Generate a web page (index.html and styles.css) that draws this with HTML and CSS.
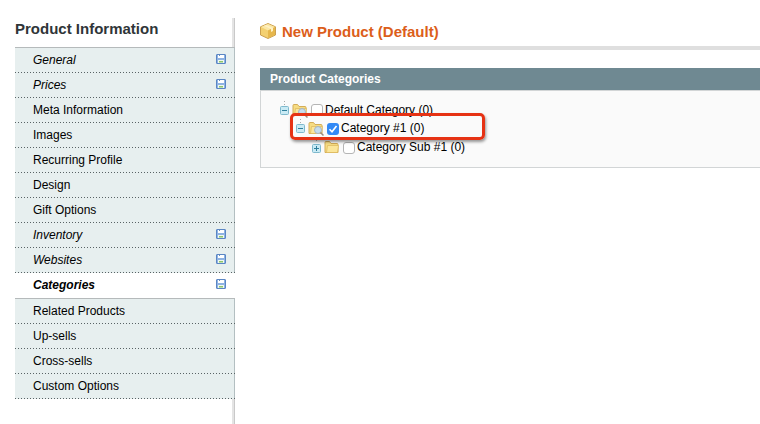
FILE: index.html
```
<!DOCTYPE html>
<html lang="en">
<head>
<meta charset="utf-8">
<title>New Product</title>
<link rel="stylesheet" href="styles.css">
</head>
<body>
<svg class="defs" width="0" height="0">
  <defs>
    <symbol id="disk" viewBox="0 0 10 10">
      <rect x=".5" y=".5" width="9" height="9" rx=".5" fill="#8fb3e3" stroke="#5b86c4"/>
      <rect x="2" y="1" width="6" height="3" fill="#fff"/>
      <rect x="3" y="1" width="1" height="1" fill="#6d8fb9"/>
      <rect x="2" y="6" width="6" height="3" fill="#f2f8ee"/>
      <rect x="3" y="7" width="4" height="1.500" fill="#8cc66c"/>
    </symbol>
    <symbol id="folder" viewBox="0 0 16 14">
      <path d="M1 12.500V2.500Q1 1.500 2 1.500H5.500L7 3.500H13Q14 3.500 14 4.500V12.500Z" fill="#f6dc83" stroke="#d4ad58"/>
      <path d="M2.500 12.500L3.500 5.500H14.500L13.500 12.500Z" fill="#fbe69a" stroke="#dcb75c" stroke-width=".7"/>
    </symbol>
    <symbol id="search" viewBox="0 0 17 16">
      <use href="#folder" width="16" height="14"/>
      <circle cx="10" cy="9" r="3.500" fill="#c5dced" stroke="#a7b5c3"/>
      <path d="M12.500 11.500L15.500 14.500" stroke="#9a897e" stroke-width="1.500"/>
    </symbol>
    <symbol id="minus" viewBox="0 0 9 9">
      <rect x=".5" y=".5" width="8" height="8" rx="1" fill="#c9eaf4" stroke="#7fb9cd"/>
      <path d="M2 4.500H7" stroke="#2f7f9c"/>
    </symbol>
    <symbol id="plus" viewBox="0 0 9 9">
      <use href="#minus" width="9" height="9"/>
      <path d="M4.500 2V7" stroke="#2f7f9c"/>
    </symbol>
  </defs>
</svg>
<div class="page">
  <aside class="sidebar">
    <h3>Product Information</h3>
    <ul class="tabs">
      <li class="changed"><span>General</span><svg><use href="#disk"/></svg></li>
      <li class="changed"><span>Prices</span><svg><use href="#disk"/></svg></li>
      <li><span>Meta Information</span></li>
      <li><span>Images</span></li>
      <li><span>Recurring Profile</span></li>
      <li><span>Design</span></li>
      <li><span>Gift Options</span></li>
      <li class="changed"><span>Inventory</span><svg><use href="#disk"/></svg></li>
      <li class="changed"><span>Websites</span><svg><use href="#disk"/></svg></li>
      <li class="changed active"><span>Categories</span><svg><use href="#disk"/></svg></li>
      <li><span>Related Products</span></li>
      <li><span>Up-sells</span></li>
      <li><span>Cross-sells</span></li>
      <li><span>Custom Options</span></li>
    </ul>
  </aside>
  <main class="content">
    <header class="title">
      <svg class="box" viewBox="0 0 16 16">
        <path d="M8 .5L15.500 3.800V12L8 15.500L.5 12V3.800Z" fill="#f3d071" stroke="#cba050"/>
        <path d="M1 4L8 1L15 4L8 7.500Z" fill="#fbe7a5"/>
        <path d="M8 7.500L15 4V11.800L8 15Z" fill="#e6b74c"/>
        <path d="M4 2.700L11 6V9L13 8V5L6 1.900Z" fill="#fff1c4"/>
      </svg>
      <h1>New Product (Default)</h1>
    </header>
    <h4>Product Categories</h4>
    <section class="tree">
      <div class="node root"><svg class="toggle"><use href="#minus"/></svg><svg class="folder"><use href="#search" width="17" height="16"/></svg><i class="check"></i><span>Default Category (0)</span></div>
      <div class="node child"><svg class="toggle"><use href="#minus"/></svg><svg class="folder"><use href="#search" width="17" height="16"/></svg><i class="check on"><svg viewBox="0 0 12 12"><path d="M2.500 6.200L5 8.800L9.500 3" fill="none" stroke="#fff" stroke-width="1.600"/></svg></i><span>Category #1 (0)</span></div>
      <div class="node leaf"><svg class="toggle"><use href="#plus"/></svg><svg class="folder"><use href="#folder" width="16" height="14"/></svg><i class="check"></i><span>Category Sub #1 (0)</span></div>
      <div class="highlight"></div>
    </section>
  </main>
</div>
</body>
</html>
```
FILE: styles.css
```
* { box-sizing: border-box; }
body { margin: 0; background: #fff; color: #000; font: 12px/16px "Liberation Sans", Arial, sans-serif; overflow: hidden; }
h1, h3, h4, ul { margin: 0; padding: 0; }
svg { display: block; flex: none; }
.defs { position: absolute; }
.page { display: flex; height: 424px; padding-top: 18px; }
.sidebar { width: 220px; margin-left: 15px; background: linear-gradient(90deg, #e4e4e4 0 2px, #c9c9c9 2px) right / 3px 100% no-repeat; }
h3 { height: 29px; font-size: 15px; line-height: 22px; color: #2f3538; }
.tabs { list-style: none; border-top: 1px solid #b5babb; }
.tabs li { position: relative; display: flex; align-items: center; justify-content: space-between; height: 25px; padding: 0 8px 1px 18px; background: #e7efef; border-right: 1px solid #b3bfc1; }
.tabs li::after { content: ""; position: absolute; left: 0; right: -1px; bottom: 0; height: 1px; background: repeating-linear-gradient(90deg, #596365 0 1px, #e7efef 1px 3px); }
.tabs svg { width: 10px; height: 10px; margin-bottom: 2px; }
.changed { font-style: italic; }
.tabs .active { height: 26px; padding-bottom: 2px; font-weight: bold; background: #fff; border-right-color: #fff; }
.tabs .active::after { background: #b5babb; }
.content { flex: 1; margin-left: 25px; }
.title { display: flex; align-items: center; height: 32px; padding-bottom: 2px; border-bottom: 4px solid #dfdfdf; }
.box { width: 16px; height: 16px; margin-right: 6px; }
h1 { padding-top: 2px; font-size: 15px; line-height: 24px; color: #dc5e1a; }
h4 { height: 22px; margin-top: 18px; padding-left: 10px; background: #6f8992; color: #fff; font-size: 12px; line-height: 22px; }
.tree { position: relative; height: 78px; padding: 10px 0 0 19px; background: #fafafa; border: 1px solid #d2d5d6; border-right: 0; }
.node { display: flex; align-items: center; height: 18px; }
.node::before { content: ""; align-self: flex-start; width: 1px; height: 5px; margin: 0 -5px 0 4px; background: repeating-linear-gradient(#aaa 0 1px, transparent 1px 3px); }
.child { padding-left: 16px; }
.leaf { height: 20px; padding-left: 32px; }
.folder, .leaf .check, .leaf .toggle { position: relative; top: 1px; }
.toggle { width: 9px; height: 9px; margin-right: 3px; }
.folder { width: 17px; height: 16px; margin-right: 2px; }
.check { flex: none; width: 12px; height: 12px; margin-right: 2px; background: #fff; border: 1px solid #b5b5b5; border-radius: 3px; }
.on { position: relative; top: 1px; border: 0; background: #3289f5; }
.highlight { position: absolute; left: 29px; top: 22px; width: 195px; height: 27px; border: 3px solid #e63214; border-radius: 5px; box-shadow: 1px 2px 3px #0006; }
```
